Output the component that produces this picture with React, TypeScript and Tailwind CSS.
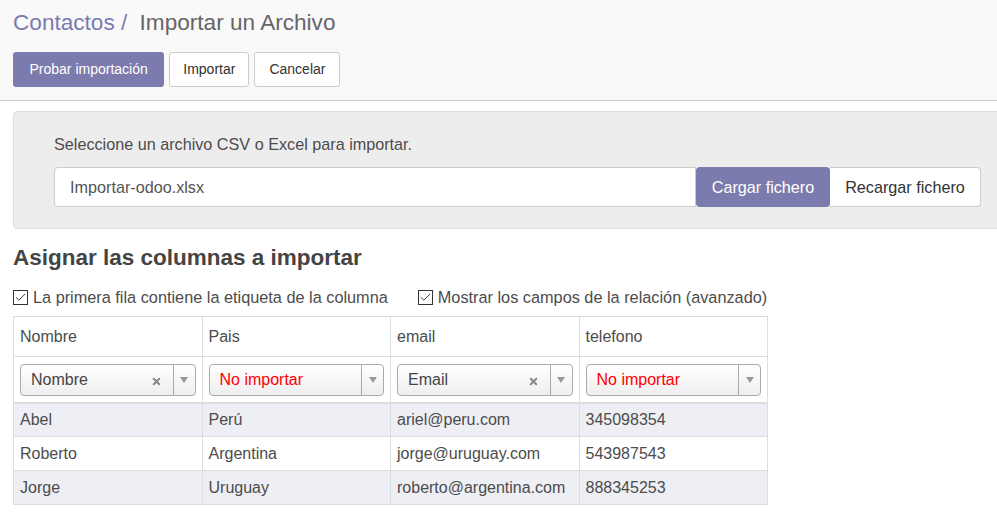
import { Check, X } from "lucide-react"

const columns = ["Nombre", "Pais", "email", "telefono"]

const mappings = [
  { label: "Nombre", mapped: true },
  { label: "No importar", mapped: false },
  { label: "Email", mapped: true },
  { label: "No importar", mapped: false },
]

const rows = [
  ["Abel", "Perú", "ariel@peru.com", "345098354"],
  ["Roberto", "Argentina", "jorge@uruguay.com", "543987543"],
  ["Jorge", "Uruguay", "roberto@argentina.com", "888345253"],
]

const FieldSelect = ({ label, mapped }: { label: string; mapped: boolean }) => (
  <div className="mt-[1px] flex h-[32px] items-center rounded-[4px] border border-[#aaa] bg-gradient-to-b from-white to-[#eeeeee] text-[16px]">
    <span className={`flex-1 pl-[10px] ${mapped ? "text-[#444]" : "text-[#ff0000]"}`}>{label}</span>
    {mapped && <X size={11} strokeWidth={4.5} className="mr-[11px] mt-[3px] text-[#888]" />}
    <div className="flex h-full w-[22px] items-center justify-center border-l border-[#aaa]">
      <span className="h-0 w-0 border-x-[4px] border-t-[6px] border-x-transparent border-t-[#999]" />
    </div>
  </div>
)

const Checkbox = ({ label }: { label: string }) => (
  <label className="flex items-center gap-[5px]">
    <span className="flex h-[15px] w-[15px] items-center justify-center border border-[#333] bg-white">
      <Check size={13} strokeWidth={1.75} className="text-[#333]" />
    </span>
    {label}
  </label>
)

export default function App() {
  return (
    <div className="min-h-[527px] overflow-hidden bg-white font-['Liberation_Sans',Arial,sans-serif] text-[#4c4c4c]">
      <div className="border-b border-[#ccc] bg-[#f9f9f9] px-[13px] pb-[13px] pt-[9px]">
        <div className="text-[22.6px] leading-[27px]">
          <span className="text-[#7c7bad]">Contactos</span>
          <span className="text-[#7c7bad]"> / </span>
          <span className="ml-[6px] text-[#666]">Importar un Archivo</span>
        </div>
        <div className="mt-[16px] flex gap-[5px] text-[14px]">
          <button className="h-[35px] rounded-[3px] bg-[#7c7bad] px-[16.5px] text-white">Probar importación</button>
          <button className="h-[35px] rounded-[3px] border border-[#ccc] bg-white px-[13px] text-[#333]">Importar</button>
          <button className="h-[35px] rounded-[3px] border border-[#ccc] bg-white px-[14px] text-[#333]">Cancelar</button>
        </div>
      </div>

      <div className="ml-[13px] mr-[-10px] mt-[10px] rounded-l-[4px] border border-[#ddd] bg-[#eeeded] pb-[21px] pl-[40px] pt-[22px] text-[16.2px]">
        <p className="leading-[20px]">Seleccione un archivo CSV o Excel para importar.</p>
        <div className="mt-[13px] flex h-[40px] w-[927px]">
          <div className="flex flex-1 items-center rounded-l-[4px] border border-[#ccc] bg-white pl-[15px] text-[#555]">
            Importar-odoo.xlsx
          </div>
          <button className="w-[134px] rounded-[4px] bg-[#7c7bad] text-white">Cargar fichero</button>
          <button className="w-[151px] rounded-r-[4px] border border-l-0 border-[#ccc] bg-white text-[#333]">
            Recargar fichero
          </button>
        </div>
      </div>

      <div className="px-[13px]">
        <h2 className="mt-[15px] text-[22.5px] font-bold leading-[28px] text-[#444]">Asignar las columnas a importar</h2>
        <div className="mt-[15px] flex gap-[30px] text-[16.3px] leading-[20px]">
          <Checkbox label="La primera fila contiene la etiqueta de la columna" />
          <Checkbox label="Mostrar los campos de la relación (avanzado)" />
        </div>

        <table className="mt-[9px] w-[755px] table-fixed border-collapse text-[16px]">
          <thead>
            <tr>
              {columns.map((c) => (
                <th key={c} className="h-[40px] border border-[#ddd] px-[6px] text-left font-normal">
                  {c}
                </th>
              ))}
            </tr>
            <tr>
              {mappings.map((m, i) => (
                <th key={i} className="h-[46px] border border-b-2 border-[#ddd] px-[6px] text-left font-normal">
                  <FieldSelect label={m.label} mapped={m.mapped} />
                </th>
              ))}
            </tr>
          </thead>
          <tbody>
            {rows.map((r, i) => (
              <tr key={i} className={i % 2 === 0 ? "bg-[#eeeef5]" : "bg-white"}>
                {r.map((v, j) => (
                  <td key={j} className="h-[34px] border border-[#ddd] px-[6px]">
                    {v}
                  </td>
                ))}
              </tr>
            ))}
          </tbody>
        </table>
      </div>
    </div>
  )
}
